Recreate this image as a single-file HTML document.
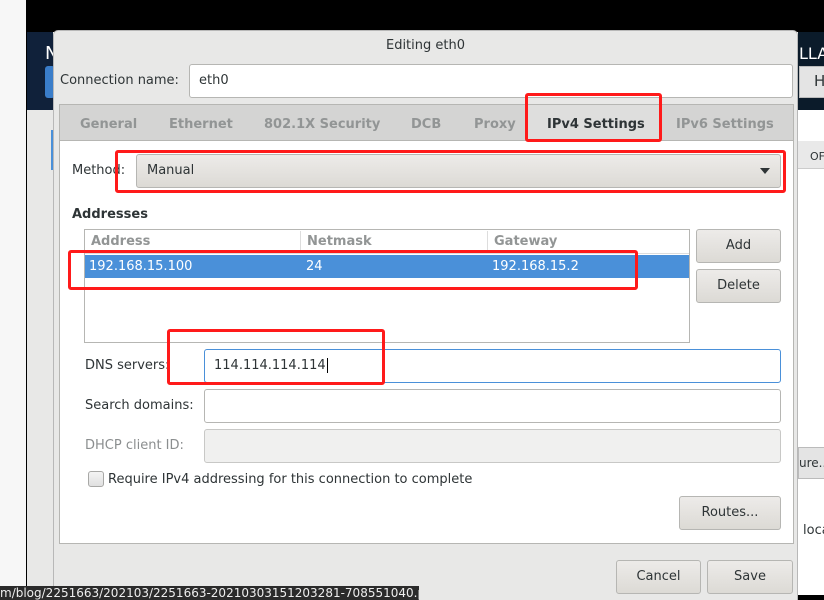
<!DOCTYPE html>
<html style="overflow:hidden;width:824px;height:600px"><head><meta charset="utf-8"><style>
*{box-sizing:border-box;margin:0;padding:0}
body{width:824px;height:600px;position:relative;overflow:hidden;background:#f7f7f7;font-family:"DejaVu Sans","Liberation Sans",sans-serif;font-size:13px;line-height:19px;color:#2e3436}
.a{position:absolute}
.btn{position:absolute;border:1px solid #b6b6b3;border-radius:3px;background:linear-gradient(#edebe9,#dcdad5);text-align:center;color:#2e3436}
.ent{position:absolute;border:1px solid #b6b6b3;border-radius:3px;background:#fff}
.red{position:absolute;border:3px solid #ff1a1a;border-radius:3px}
.tab{position:absolute;top:115px;font-weight:bold;color:#929595}
</style></head><body>
<div class="a" style="left:26px;top:0;width:1px;height:600px;background:#000"></div>
<div class="a" style="left:27px;top:0;width:797px;height:32px;background:#000"></div>
<div class="a" style="left:27px;top:32px;width:26px;height:568px;background:#e8e8e7"></div>
<div class="a" style="left:27px;top:32px;width:26px;height:78px;background:#10213a"></div>
<div class="a" style="left:45px;top:44px;color:#fff;font-size:18px">N</div>
<div class="a" style="left:45px;top:66px;width:10px;height:32px;background:#3a7dc9;border-radius:3px"></div>
<div class="a" style="left:51px;top:130px;width:2px;height:40px;background:#4a90d9"></div>
<!-- right side -->
<div class="a" style="left:798px;top:32px;width:26px;height:568px;background:#fff"></div>
<div class="a" style="left:798px;top:32px;width:26px;height:78px;background:#0b1b2a"></div>
<div class="a" style="left:799px;top:44px;color:#fff;font-size:16px">LLA</div>
<div class="a" style="left:799px;top:66px;width:30px;height:32px;background:#e4e4e4;border:1px solid #bbb;padding:5px 0 0 14px;font-size:15px">H</div>
<div class="a" style="left:798px;top:141px;width:26px;height:28px;background:#e9e9e9;border-bottom:1px solid #ccc;padding:6px 0 0 12px;font-size:11px">OF</div>
<div class="a" style="left:798px;top:447px;width:30px;height:32px;background:#e4e4e4;border:1px solid #bbb;padding:6px 0 0 0;font-size:12px">ure..</div>
<div class="a" style="left:803px;top:521px;font-size:13px">loca</div>
<div class="a" style="left:798px;top:595px;width:26px;height:5px;background:#000"></div>
<!-- dialog -->
<div class="a" style="left:53px;top:30px;width:745px;height:570px;background:#e8e8e7;border:1px solid #b8b8b8;border-bottom:none;border-radius:5px 5px 0 0"></div>
<div class="a" style="left:53px;top:36px;width:745px;text-align:center;color:#2e3436">Editing eth0</div>
<div class="a" style="left:60px;top:71px">Connection name:</div>
<div class="ent" style="left:189px;top:64px;width:604px;height:34px;padding:6px 0 0 9px">eth0</div>
<!-- notebook -->
<div class="a" style="left:59px;top:104px;width:735px;height:440px;background:#fff;border:1px solid #b6b6b3"></div>
<div class="a" style="left:60px;top:105px;width:733px;height:36px;background:#d4d4d3;border-bottom:1px solid #b6b6b3"></div>
<div class="a" style="left:526px;top:105px;width:134px;height:36px;background:#dededd"></div>
<div class="tab" style="left:80px">General</div>
<div class="tab" style="left:169px">Ethernet</div>
<div class="tab" style="left:264px">802.1X Security</div>
<div class="tab" style="left:411px">DCB</div>
<div class="tab" style="left:474px">Proxy</div>
<div class="tab" style="left:547px;color:#2e3436">IPv4 Settings</div>
<div class="tab" style="left:676px">IPv6 Settings</div>
<div class="a" style="left:72px;top:161px">Method:</div>
<div class="btn" style="left:136px;top:154px;width:645px;height:34px;text-align:left;padding:6px 0 0 10px">Manual</div>
<div class="a" style="left:760px;top:168px;width:0;height:0;border-left:5px solid transparent;border-right:5px solid transparent;border-top:6px solid #2e3436"></div>
<div class="a" style="left:72px;top:205px;font-weight:bold">Addresses</div>
<div class="a" style="left:84px;top:229px;width:606px;height:114px;border:1px solid #b6b6b3;background:#fff"></div>
<div class="a" style="left:85px;top:230px;width:604px;height:24px;border-bottom:1px solid #ddd"></div>
<div class="a" style="left:300px;top:231px;width:1px;height:22px;background:#ddd"></div>
<div class="a" style="left:487px;top:231px;width:1px;height:22px;background:#ddd"></div>
<div class="a" style="left:91px;top:232px;font-weight:bold;color:#929595">Address</div>
<div class="a" style="left:307px;top:232px;font-weight:bold;color:#929595">Netmask</div>
<div class="a" style="left:494px;top:232px;font-weight:bold;color:#929595">Gateway</div>
<div class="a" style="left:85px;top:255px;width:604px;height:23px;background:#4a90d9;color:#fff"></div>
<div class="a" style="left:89px;top:257px;color:#fff">192.168.15.100</div>
<div class="a" style="left:306px;top:257px;color:#fff">24</div>
<div class="a" style="left:492px;top:257px;color:#fff">192.168.15.2</div>
<div class="btn" style="left:696px;top:229px;width:85px;height:34px;padding-top:6px">Add</div>
<div class="btn" style="left:696px;top:269px;width:85px;height:34px;padding-top:6px">Delete</div>
<div class="a" style="left:85px;top:356px">DNS servers:</div>
<div class="ent" style="left:204px;top:349px;width:577px;height:34px;border-color:#4a90d9;padding:6px 0 0 9px">114.114.114.114<span style="border-left:1px solid #000;margin-left:1px"></span></div>
<div class="a" style="left:85px;top:396px">Search domains:</div>
<div class="ent" style="left:204px;top:389px;width:577px;height:34px"></div>
<div class="a" style="left:85px;top:436px;color:#8b8e8f">DHCP client ID:</div>
<div class="ent" style="left:204px;top:429px;width:577px;height:34px;background:#f0f0ef;border-color:#c8c8c6"></div>
<div class="a" style="left:88px;top:471px;width:16px;height:16px;border:1px solid #a8a8a6;border-radius:3px;background:linear-gradient(#f4f4f4,#e0e0e0)"></div>
<div class="a" style="left:108px;top:470px">Require IPv4 addressing for this connection to complete</div>
<div class="btn" style="left:679px;top:496px;width:102px;height:34px;padding-top:6px">Routes...</div>
<div class="btn" style="left:616px;top:560px;width:85px;height:34px;padding-top:6px">Cancel</div>
<div class="btn" style="left:707px;top:560px;width:86px;height:34px;padding-top:6px">Save</div>
<!-- red boxes -->
<div class="red" style="left:525px;top:93px;width:137px;height:49px"></div>
<div class="red" style="left:115px;top:150px;width:671px;height:43px"></div>
<div class="red" style="left:68px;top:250px;width:570px;height:40px"></div>
<div class="red" style="left:167px;top:329px;width:218px;height:56px"></div>
<!-- tooltip -->
<div class="a" style="left:0;top:586px;width:419px;height:14px;background:#2b2b2b;color:#eee;font-size:12px;line-height:14px;white-space:nowrap;overflow:hidden">m/blog/2251663/202103/2251663-20210303151203281-708551040.png</div>
</body></html>
